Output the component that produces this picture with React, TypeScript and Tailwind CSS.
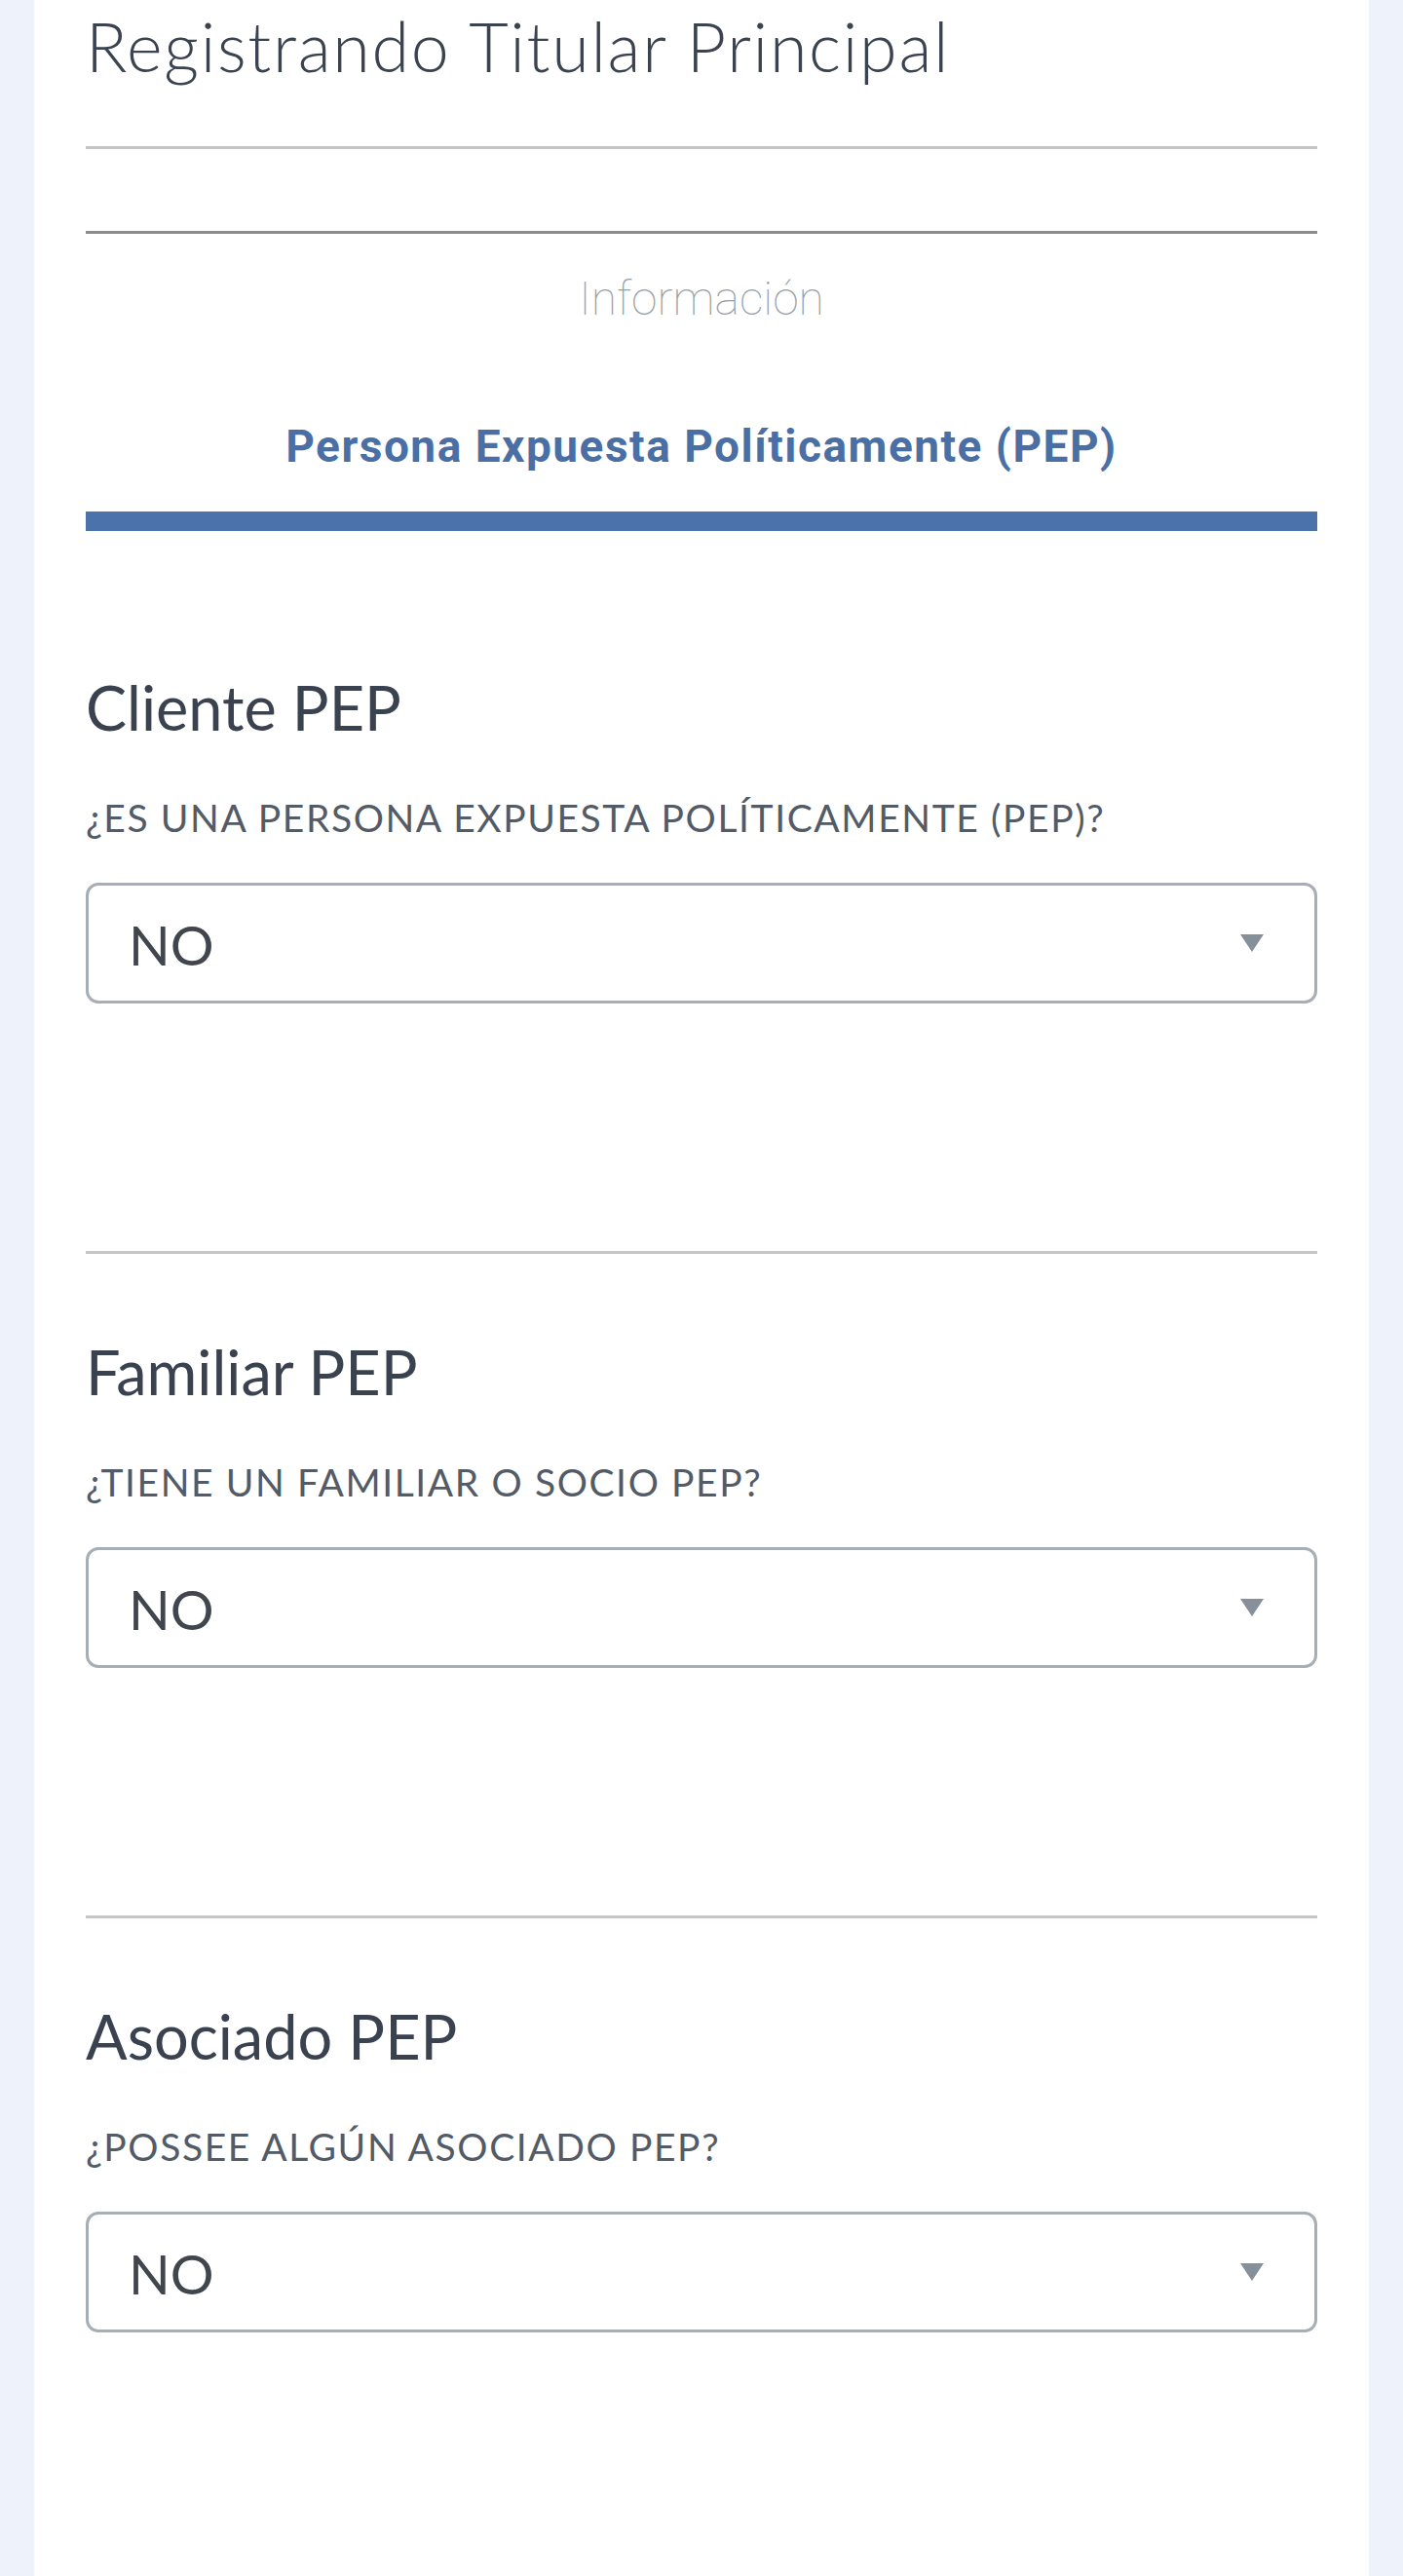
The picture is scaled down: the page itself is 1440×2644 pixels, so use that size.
const sections = [
  { title: 'Cliente PEP', question: '¿ES UNA PERSONA EXPUESTA POLÍTICAMENTE (PEP)?' },
  { title: 'Familiar PEP', question: '¿TIENE UN FAMILIAR O SOCIO PEP?' },
  { title: 'Asociado PEP', question: '¿POSSEE ALGÚN ASOCIADO PEP?' },
];

function SelectBox({ value }: { value: string }) {
  return (
    <div className="mt-[47px] h-[124px] border-[3px] border-[#a7aeb5] rounded-[13px] flex items-center justify-between pl-[41px] pr-[52px] bg-white">
      <span className="mt-[4px] text-[56px] leading-none text-[#41464e]">{value}</span>
      <svg width="24" height="18" viewBox="0 0 24 18" className="blur-[0.6px]">
        <polygon points="0,0 24,0 12,18" fill="#86909a" />
      </svg>
    </div>
  );
}

export default function App() {
  return (
    <div className="min-h-[2644px] bg-[#eef2fa] font-['Lato',sans-serif]">
      <div className="mx-[35px] min-h-[2644px] bg-white px-[53px]">
        {/* Header */}
        <h1 className="pt-[12px] text-[70px] font-light leading-none tracking-[1.7px] text-[#3b4350]">
          Registrando Titular Principal
        </h1>
        <div className="mt-[68px] h-[3px] bg-[#c4c4c4]" />
        <div className="mt-[84px] h-[3px] bg-[#8c8c8c]" />

        {/* Tabs */}
        <p className="mt-[43px] text-center font-['Roboto',sans-serif] font-thin text-[48px] leading-none text-[#979ea6]">
          Información
        </p>
        <p className="mt-[104px] text-center font-['Roboto',sans-serif] font-bold text-[46px] leading-none tracking-[1.5px] text-[#4a6fa5]">
          Persona Expuesta Políticamente (PEP)
        </p>
        <div className="mt-[44px] h-[20px] bg-[#4b72aa]" />

        {/* Sections */}
        {sections.map((s, i) => (
          <section key={s.title}>
            {i > 0 && <div className="mt-[254px] h-[3px] bg-[#c6c6c6]" />}
            <h2
              className={
                (i === 0 ? 'mt-[149px]' : 'mt-[89px]') +
                ' text-[63px] leading-none text-[#3a4250]'
              }
            >
              {s.title}
            </h2>
            <p className="mt-[63px] text-[39px] leading-none tracking-[1.6px] text-[#525b66]">
              {s.question}
            </p>
            <SelectBox value="NO" />
          </section>
        ))}
      </div>
    </div>
  );
}
